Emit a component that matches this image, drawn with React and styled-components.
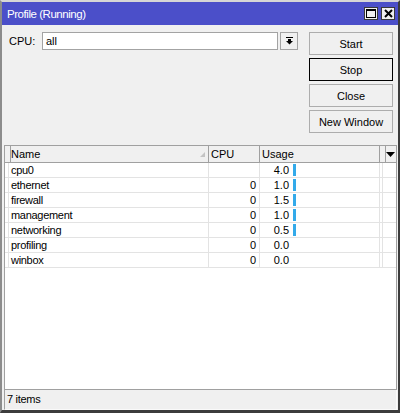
import React from "react";
import styled, { createGlobalStyle } from "styled-components";

const Global = createGlobalStyle`
  html, body { margin: 0; padding: 0; background: #f0f0f0; }
  * { box-sizing: border-box; }
`;

const Window = styled.div`
  width: 400px;
  height: 413px;
  display: flex;
  flex-direction: column;
  background: #f0f0f0;
  border-top: 2px solid #d6d6d6;
  border-left: 2px solid #8c8c8c;
  border-right: 2px solid #3c3c3c;
  border-bottom: 3px solid #3c3c3c;
  font-family: "Liberation Sans", Arial, sans-serif;
  font-size: 11px;
  color: #000;
`;

const TitleBar = styled.div`
  height: 23px;
  flex: none;
  background: #4b4fc9;
  display: flex;
  align-items: center;
  padding: 0 3px 0 5px;
`;

const Title = styled.div`
  color: #fff;
  font-size: 11.5px;
  letter-spacing: -0.45px;
  flex: 1;
`;

const TitleBtn = styled.div`
  width: 14px;
  height: 13px;
  margin-left: 3px;
  background: #f0f0f0;
  border: 1px solid #3a3a3a;
  display: flex;
  align-items: center;
  justify-content: center;
`;

const Form = styled.div`
  flex: none;
  display: flex;
  align-items: flex-start;
  padding: 7px 5px 12px 7px;
`;

const Label = styled.span`
  width: 33px;
  line-height: 18px;
`;

const Input = styled.div`
  width: 236px;
  height: 18px;
  background: #fff;
  border: 1px solid #a3a3a3;
  padding-left: 3px;
  line-height: 16px;
`;

const DropBtn = styled.div`
  width: 18px;
  height: 18px;
  margin-left: 2px;
  border: 1px solid #a3a3a3;
  background: #f0f0f0;
  display: flex;
  align-items: center;
  justify-content: center;
`;

const Buttons = styled.div`
  margin-left: auto;
  display: flex;
  flex-direction: column;
  gap: 3px;
`;

const Button = styled.div`
  width: 84px;
  height: 23px;
  border: 1px solid ${(p) => (p.$focused ? "#000" : "#adadad")};
  background: #f0f0f0;
  display: flex;
  align-items: center;
  justify-content: center;
`;

const Panel = styled.div`
  flex: 1;
  margin: 0 1px 0 2px;
  background: #fff;
  border: 1px solid #a0a0a0;
  display: flex;
  flex-direction: column;
`;

const cols = "4px 200px 51px 120px 3px 1fr";

const HeaderRow = styled.div`
  display: grid;
  grid-template-columns: ${cols};
  height: 17px;
  background: #f0f0f0;
  border-bottom: 1px solid #a0a0a0;
`;

const HeadCell = styled.div`
  border-right: 1px solid ${(p) => (p.$last ? "transparent" : "#a0a0a0")};
  padding-left: 2px;
  line-height: 16px;
  display: flex;
  align-items: center;
  justify-content: ${(p) => (p.$center ? "center" : "space-between")};
  padding-right: ${(p) => (p.$center ? "0" : "3px")};
`;

const Row = styled.div`
  display: grid;
  grid-template-columns: ${cols};
  height: 15px;
  border-bottom: 1px solid #e3e3e3;
`;

const Cell = styled.div`
  border-right: 1px solid ${(p) => (p.$last ? "transparent" : "#e3e3e3")};
  line-height: 14px;
  padding: 0 ${(p) => (p.$right ? "3px" : "0")} 0 ${(p) => (p.$right ? "0" : "2px")};
  text-align: ${(p) => (p.$right ? "right" : "left")};
  letter-spacing: ${(p) => (p.$tight ? "-0.3px" : "0")};
  white-space: nowrap;
  overflow: hidden;
`;

const UsageCell = styled.div`
  border-right: 1px solid #e3e3e3;
  display: flex;
  align-items: center;
  line-height: 14px;
`;

const UsageNum = styled.span`
  width: 29px;
  text-align: right;
`;

const Bar = styled.span`
  margin-left: 4px;
  height: 12px;
  background: #33aaea;
`;

const Status = styled.div`
  flex: none;
  height: 20px;
  margin: 0 1px 0 2px;
  border-left: 1px solid #a0a0a0;
  border-bottom: 1px solid #fafafa;
  border-right: 1px solid #fafafa;
  padding-left: 2px;
  line-height: 19px;
  letter-spacing: -0.3px;
`;

const rows = [
  { name: "cpu0", cpu: "", usage: 4.0 },
  { name: "ethernet", cpu: "0", usage: 1.0 },
  { name: "firewall", cpu: "0", usage: 1.5 },
  { name: "management", cpu: "0", usage: 1.0 },
  { name: "networking", cpu: "0", usage: 0.5 },
  { name: "profiling", cpu: "0", usage: 0.0 },
  { name: "winbox", cpu: "0", usage: 0.0 },
];

const MaxIcon = () => (
  <svg width="10" height="9" viewBox="0 0 10 9">
    <rect x="0.5" y="0.5" width="9" height="8" fill="none" stroke="#000" />
    <rect x="0" y="0" width="10" height="2" fill="#000" />
  </svg>
);

const CloseIcon = () => (
  <svg width="9" height="9" viewBox="0 0 9 9">
    <path d="M1 1 L8 8 M8 1 L1 8" stroke="#000" strokeWidth="2" />
  </svg>
);

const DownIcon = () => (
  <svg width="7" height="8" viewBox="0 0 7 8">
    <rect x="0" y="0" width="7" height="1" fill="#000" />
    <rect x="2" y="2" width="3" height="2" fill="#000" />
    <path d="M0 4 L7 4 L3.5 7.5 Z" fill="#000" />
  </svg>
);

const SortMark = () => (
  <svg width="5" height="5" viewBox="0 0 5 5">
    <path d="M5 0 L5 5 L0 5 Z" fill="#c4c4c4" />
  </svg>
);

const HeadArrow = () => (
  <svg width="9" height="5" viewBox="0 0 9 5">
    <path d="M0 0 L9 0 L4.5 5 Z" fill="#000" />
  </svg>
);

export default function App() {
  return (
    <>
      <Global />
      <Window>
        <TitleBar>
          <Title>Profile (Running)</Title>
          <TitleBtn><MaxIcon /></TitleBtn>
          <TitleBtn><CloseIcon /></TitleBtn>
        </TitleBar>
        <Form>
          <Label>CPU:</Label>
          <Input>all</Input>
          <DropBtn><DownIcon /></DropBtn>
          <Buttons>
            <Button>Start</Button>
            <Button $focused>Stop</Button>
            <Button>Close</Button>
            <Button>New Window</Button>
          </Buttons>
        </Form>
        <Panel>
          <HeaderRow>
            <HeadCell />
            <HeadCell>Name<SortMark /></HeadCell>
            <HeadCell>CPU</HeadCell>
            <HeadCell>Usage</HeadCell>
            <HeadCell />
            <HeadCell $center $last><HeadArrow /></HeadCell>
          </HeaderRow>
          {rows.map((r) => (
            <Row key={r.name}>
              <Cell />
              <Cell $tight>{r.name}</Cell>
              <Cell $right>{r.cpu}</Cell>
              <UsageCell>
                <UsageNum>{r.usage.toFixed(1)}</UsageNum>
                {r.usage > 0 && (
                  <Bar style={{ width: `${Math.max(3, Math.round(r.usage / 100 * 80))}px` }} />
                )}
              </UsageCell>
              <Cell />
              <Cell $last />
            </Row>
          ))}
        </Panel>
        <Status>7 items</Status>
      </Window>
    </>
  );
}
